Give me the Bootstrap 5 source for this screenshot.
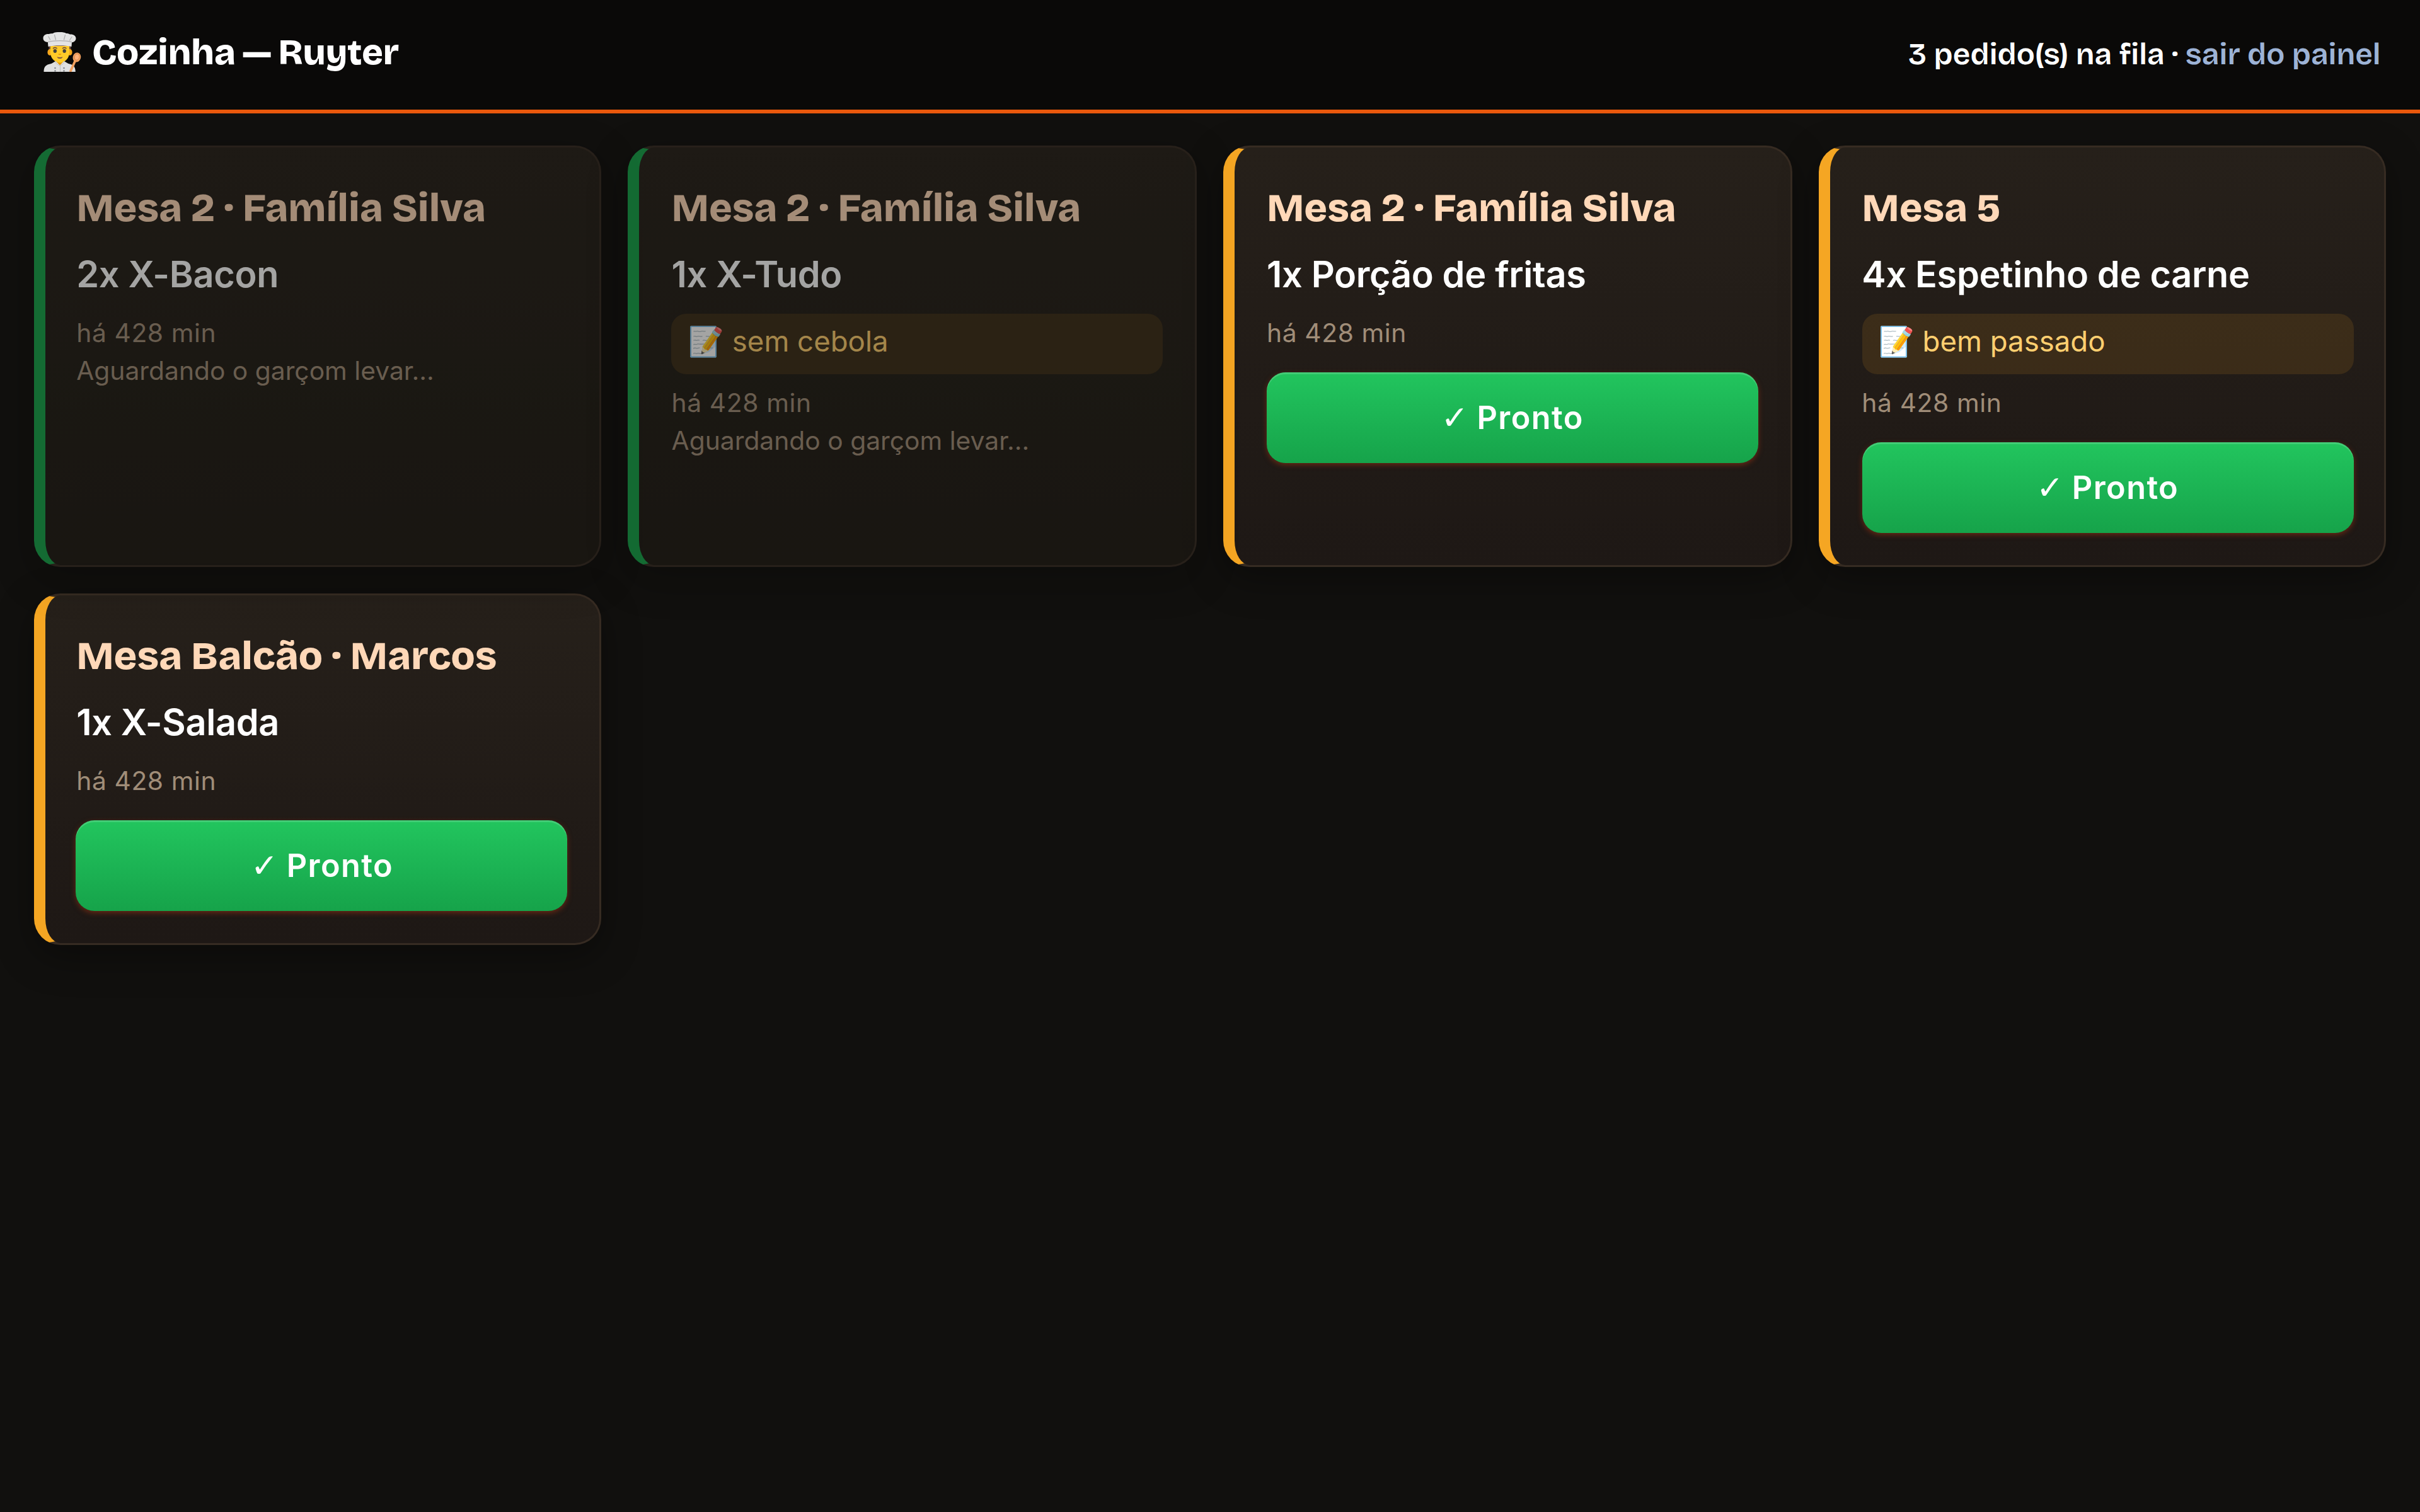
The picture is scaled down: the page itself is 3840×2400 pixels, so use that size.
<!DOCTYPE html>
<html lang="pt-BR">
<head>
    <meta charset="UTF-8">
    <meta name="viewport" content="width=device-width, initial-scale=1.0">
    <title>Cozinha — Ruyter</title>
    <link href="https://cdn.jsdelivr.net/npm/bootstrap@5.3.0/dist/css/bootstrap.min.css" rel="stylesheet">
    <style>
        body {
            height: 100vh;
            overflow: hidden;
            background-color: #11100e;
            font-family: Inter, sans-serif;
            color: #fff;
        }

        /* Wall display: 1280x800 layout shown at three times its size */
        .painel {
            width: 1280px;
            height: 800px;
            transform: scale(3);
            transform-origin: 0 0;
        }

        .topo {
            height: 60px;
            padding: 14.2px 1.3rem 0;
            background-color: #0a0908;
            border-bottom: 2px solid #ea580c;
            font-family: "Bricolage Grotesque", Inter, sans-serif;
        }

        .topo h1 {
            font-size: 1.2rem;
            font-weight: 800;
            line-height: 1.5;
            letter-spacing: -.12px;
            word-spacing: -.7px;
        }

        .topo .fila {
            font-weight: 600;
        }

        .topo a {
            color: #9db3d6;
        }

        .chef {
            width: 24.4px;
            height: 21px;
            vertical-align: -4px;
        }

        .pedidos {
            display: grid;
            grid-template-columns: repeat(4, 1fr);
            gap: .9rem;
            padding: 17.1px 1.1rem;
        }

        .pedido {
            padding: 1.05rem;
            background: linear-gradient(180deg, #26201a, #1e1815);
            border: 1px solid #362b22;
            border-left: 6px solid #f5a623;
            border-radius: 14px;
            box-shadow: 0 6px 20px rgba(0, 0, 0, .35);
        }

        .pedido.feito {
            background: linear-gradient(180deg, #26211a, #1e1a14);
            border-left-color: #16a34a;
            opacity: .62;
        }

        .mesa {
            font-family: "Bricolage Grotesque", Inter, sans-serif;
            font-size: 1.3rem;
            font-weight: 800;
            line-height: 31px;
            color: #ffd8b8;
            margin-bottom: 4.9px;
        }

        .prato {
            font-size: 1.2rem;
            font-weight: 600;
            letter-spacing: -.1px;
            margin-bottom: 6px;
        }

        .obs {
            font-size: .95rem;
            color: #ffcf70;
            background-color: rgba(249, 168, 37, .12);
            border-radius: 8px;
            padding: 4.4px .55rem 5.2px;
            margin-bottom: 4.6px;
        }

        .tempo {
            font-size: .85rem;
            color: #a08d78;
        }

        .minutos {
            letter-spacing: .2px;
        }

        .btn-pronto {
            height: 48px;
            margin-top: 11.1px;
            padding: .6px 0 0;
            font-size: 1.05rem;
            font-weight: 600;
            letter-spacing: .48px;
            word-spacing: -.8px;
            color: #fff;
            background: linear-gradient(180deg, #22c55e, #16a34a);
            border: 0;
            border-radius: 10px;
            box-shadow: inset 0 1px 0 rgba(255, 255, 255, .15), 0 1px 3px rgba(154, 52, 18, .6);
        }

        .tique {
            font-family: "DejaVu Sans", sans-serif;
            font-size: 17.4px;
            font-weight: 400;
            line-height: 1;
        }
    </style>
</head>
<body>
    <div class="painel">
        <header class="topo d-flex justify-content-between align-items-baseline">
            <h1 class="mb-0"><svg class="chef" viewBox="0 0 73.200 63" aria-hidden="true">
                <g transform="translate(5.500 0)">
                    <path fill="#6d4c41" d="M9 20h35v13H9z"/>
                    <ellipse cx="10.5" cy="32" rx="3.6" ry="5" fill="#f7a81b"/>
                    <ellipse cx="42.5" cy="32" rx="3.6" ry="5" fill="#f7a81b"/>
                    <path fill="#e59600" d="M21 42h11v10H21z"/>
                    <path fill="#ffca28" d="M11.500 22h30v11c0 8-7 15.500-15 15.500s-15-7.500-15-15.500z"/>
                    <path fill="#e0e0e0" d="M1 63c0-8 3-11.500 12-13l7-4 6.500 6.500 6.500-6.500 7 4c8 1.500 11.300 5 11.300 13z"/>
                    <path fill="none" stroke="#bdbdbd" stroke-width="1" d="M19.500 46c0 4 4 6.500 7 6.500s7-2.500 7-6.500M27 52.500V63"/>
                    <g fill="#82868b"><circle cx="19" cy="57" r="1.300"/><circle cx="19" cy="61.500" r="1.300"/><circle cx="33" cy="57" r="1.300"/><circle cx="33" cy="61.500" r="1.300"/></g>
                    <path fill="#e4e4e4" d="M8 23l-.6-7C2 15.500 0 13 0 9.500 0 5 4 2.500 9 3 12 2 14 2.500 15.500 2 18 0 22 0 26.500 0s8 .5 10 2c2 0 4 0 6 1.500 5-.5 9.500 2 9.500 6.500 0 3-2 5.500-6.500 6.500l-.5 6.500c-10-2.500-27-2.500-37 0z"/>
                    <path fill="none" stroke="#b0b0b0" stroke-width="1.300" stroke-linecap="round" d="M8 15.500c10-2.500 27-2.500 37 0M11 12L8.500 7M20 12L18 4.500M33 12l2-7.500M42 13l3.500-5.500"/>
                    <path fill="none" stroke="#6d4c41" stroke-width="1.500" stroke-linecap="round" d="M16 25.700c1.500-1.200 4-1.200 5.500 0M31 25.700c1.500-1.200 4-1.200 5.500 0"/>
                    <ellipse cx="18.800" cy="30" rx="2.700" ry="3" fill="#404040"/>
                    <ellipse cx="33.700" cy="30" rx="2.700" ry="3" fill="#404040"/>
                    <path fill="#e59600" d="M23.800 34.500h5c-.5 2.200-4.500 2.200-5 0z"/>
                    <path fill="#795548" d="M22 39.200c3 1 6 1 9 0-1 3.800-8 3.800-9 0z"/>
                    <path fill="none" stroke="#f2a15f" stroke-width="3.800" d="M43 63L51.500 44"/>
                    <ellipse cx="53.400" cy="40" rx="6.300" ry="7.600" fill="#f2a15f" transform="rotate(16 53.400 40)"/>
                    <ellipse cx="53.600" cy="39.500" rx="3.800" ry="5" fill="#ffb27a" stroke="#d07c43" stroke-width=".8" transform="rotate(16 53.600 39.500)"/>
                </g>
            </svg> Cozinha — Ruyter</h1>
            <div class="fila">3 pedido(s) na fila · <a href="#" class="text-decoration-none">sair do painel</a></div>
        </header>

        <main class="pedidos">
            <div class="pedido feito">
                <div class="mesa">Mesa 2 · Família Silva</div>
                <div class="prato">2x X-Bacon</div>
                <div class="tempo minutos">há 428 min</div>
                <div class="tempo">Aguardando o garçom levar...</div>
            </div>
            <div class="pedido feito">
                <div class="mesa">Mesa 2 · Família Silva</div>
                <div class="prato">1x X-Tudo</div>
                <div class="obs">📝 sem cebola</div>
                <div class="tempo minutos">há 428 min</div>
                <div class="tempo">Aguardando o garçom levar...</div>
            </div>
            <div class="pedido">
                <div class="mesa">Mesa 2 · Família Silva</div>
                <div class="prato">1x Porção de fritas</div>
                <div class="tempo minutos">há 428 min</div>
                <button type="button" class="btn btn-pronto w-100"><span class="tique">✓</span> Pronto</button>
            </div>
            <div class="pedido">
                <div class="mesa">Mesa 5</div>
                <div class="prato">4x Espetinho de carne</div>
                <div class="obs">📝 bem passado</div>
                <div class="tempo minutos">há 428 min</div>
                <button type="button" class="btn btn-pronto w-100"><span class="tique">✓</span> Pronto</button>
            </div>
            <div class="pedido">
                <div class="mesa">Mesa Balcão · Marcos</div>
                <div class="prato">1x X-Salada</div>
                <div class="tempo minutos">há 428 min</div>
                <button type="button" class="btn btn-pronto w-100"><span class="tique">✓</span> Pronto</button>
            </div>
        </main>
    </div>
    <script src="https://cdn.jsdelivr.net/npm/bootstrap@5.3.0/dist/js/bootstrap.bundle.min.js"></script>
</body>
</html>
